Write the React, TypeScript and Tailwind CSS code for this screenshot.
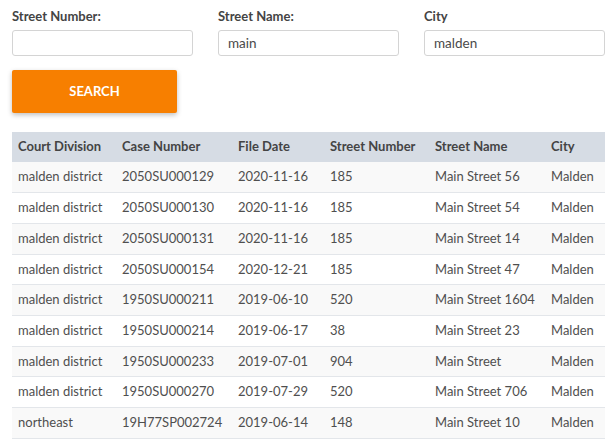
import React from "react";

const rows = [
  ["malden district", "2050SU000129", "2020-11-16", "185", "Main Street 56", "Malden"],
  ["malden district", "2050SU000130", "2020-11-16", "185", "Main Street 54", "Malden"],
  ["malden district", "2050SU000131", "2020-11-16", "185", "Main Street 14", "Malden"],
  ["malden district", "2050SU000154", "2020-12-21", "185", "Main Street 47", "Malden"],
  ["malden district", "1950SU000211", "2019-06-10", "520", "Main Street 1604", "Malden"],
  ["malden district", "1950SU000214", "2019-06-17", "38", "Main Street 23", "Malden"],
  ["malden district", "1950SU000233", "2019-07-01", "904", "Main Street", "Malden"],
  ["malden district", "1950SU000270", "2019-07-29", "520", "Main Street 706", "Malden"],
  ["northeast", "19H77SP002724", "2019-06-14", "148", "Main Street 10", "Malden"],
];

const headers = ["Court Division", "Case Number", "File Date", "Street Number", "Street Name", "City"];
const widths = ["w-[104px]", "w-[116px]", "w-[92px]", "w-[105px]", "w-[116px]", "w-auto"];

function Field({ label, value }: { label: string; value: string }) {
  return (
    <div className="flex flex-col w-[181px]">
      <label className="text-[13px] font-bold text-[#444] leading-[16px] mb-[6px]">{label}</label>
      <div className="h-[26px] border border-[#d4d4d4] rounded-[3px] bg-white px-[9px] flex items-center text-[13.5px] text-[#4a4a4a]">
        {value}
      </div>
    </div>
  );
}

export default function App() {
  return (
    <div className="w-[610px] h-[447px] bg-white overflow-hidden pl-[12px] pr-[5px] pt-[8px]" style={{ fontFamily: "Lato, 'Open Sans', sans-serif" }}>
      <div className="flex gap-[25px]">
        <Field label="Street Number:" value="" />
        <Field label="Street Name:" value="main" />
        <Field label="City" value="malden" />
      </div>
      <button className="mt-[14px] w-[165px] h-[43px] bg-[#f77f00] text-white font-bold text-[13px] rounded-[2px] shadow-[0_2px_5px_rgba(0,0,0,0.25)]">
        SEARCH
      </button>
      <table className="mt-[19px] w-[593px] border-collapse text-[13px]">
        <thead>
          <tr className="bg-[#d6dce4] h-[30px]">
            {headers.map((h, i) => (
              <th key={h} className={`text-left font-bold text-[#444] px-[6px] ${widths[i]}`}>{h}</th>
            ))}
          </tr>
        </thead>
        <tbody>
          {rows.map((r, ri) => (
            <tr key={ri} className={`h-[30.7px] border-b border-[#e3e6ea] ${ri % 2 === 0 ? "bg-[#f9f9f9]" : "bg-white"}`}>
              {r.map((c, ci) => (
                <td key={ci} className="px-[6px] text-[#4f4f4f] whitespace-nowrap">{c}</td>
              ))}
            </tr>
          ))}
        </tbody>
      </table>
    </div>
  );
}
